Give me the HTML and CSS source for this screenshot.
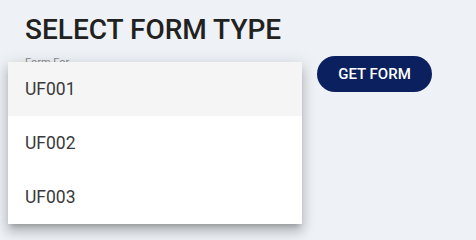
FILE: index.html
```html
<!DOCTYPE html>
<html>
<head>
<meta charset="utf-8">
<link rel="stylesheet" href="styles.css">
</head>
<body>
<div class="page">
  <h1 class="title">SELECT FORM TYPE</h1>
  <div class="form-row">
    <div class="field">
      <label class="field-label">Form For</label>
      <div class="field-input"></div>
      <ul class="menu">
        <li class="menu-item active">UF001</li>
        <li class="menu-item">UF002</li>
        <li class="menu-item">UF003</li>
      </ul>
    </div>
    <button class="btn">GET FORM</button>
  </div>
</div>
</body>
</html>
```
FILE: styles.css
```css
html, body {
  margin: 0;
  padding: 0;
  height: 100%;
  background: #eef2f6;
  font-family: Roboto, "Liberation Sans", sans-serif;
}
.page {
  box-sizing: border-box;
  min-height: 240px;
  padding: 13px 25px 0 25px;
}
.title {
  margin: 0;
  font-size: 28px;
  line-height: 34px;
  font-weight: 500;
  color: #212121;
}
.form-row {
  display: flex;
  align-items: flex-start;
  gap: 15px;
  margin-top: 9px;
}
.field {
  position: relative;
  width: 277px;
  height: 40px;
}
.field-label {
  display: block;
  font-size: 11px;
  line-height: 14px;
  color: #8a8a8a;
}
.menu {
  position: absolute;
  left: -17px;
  top: 6px;
  width: 294px;
  margin: 0;
  padding: 0;
  list-style: none;
  background: #fff;
  box-shadow: 0 5px 5px -3px rgba(0,0,0,0.2), 0 8px 10px 1px rgba(0,0,0,0.14), 0 3px 14px 2px rgba(0,0,0,0.12);
}
.menu-item {
  height: 54px;
  line-height: 54px;
  padding-left: 17px;
  font-size: 17.5px;
  color: #3a3a3a;
}
.menu-item.active {
  background: #f5f5f5;
}
.btn {
  width: 115px;
  height: 36px;
  border: none;
  border-radius: 18px;
  background: #0a205f;
  color: #fff;
  font-family: Roboto, "Liberation Sans", sans-serif;
  font-size: 15px;
  font-weight: 500;
  padding: 0;
}
```
